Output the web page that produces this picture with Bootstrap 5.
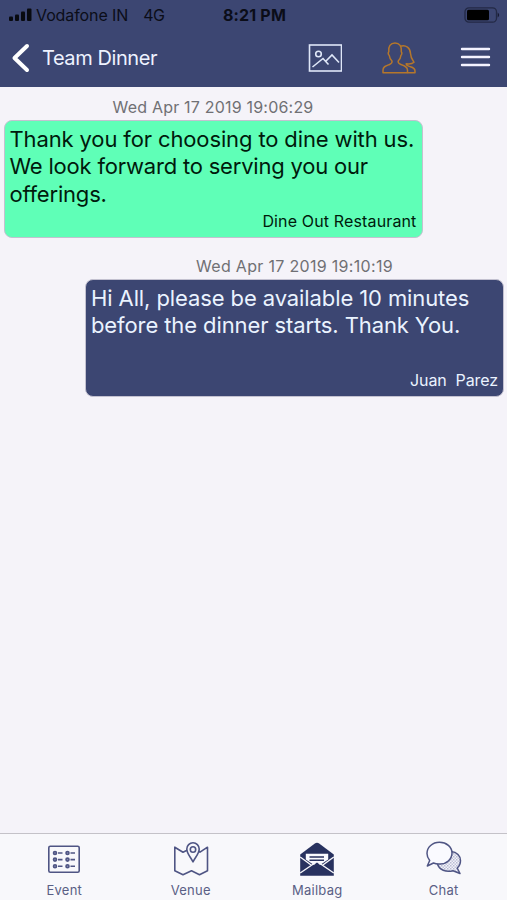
<!DOCTYPE html>
<html lang="en">
<head>
<meta charset="utf-8">
<meta name="viewport" content="width=device-width, initial-scale=1">
<title>Team Dinner</title>
<link href="https://cdn.jsdelivr.net/npm/bootstrap@5.3.0/dist/css/bootstrap.min.css" rel="stylesheet">
<style>
body{font-family:Inter,"Liberation Sans",sans-serif;background:#f5f3f9;color:#000;height:900px;overflow:hidden}
svg{display:block;flex:none}
.app-head{background:#3c4672;height:87px}
.status{height:30px;font-size:16px;line-height:30px;color:#0b0d18;padding-left:9px;padding-right:7px}
.status .side{flex:1 1 0}
.carrier{letter-spacing:-.1px;margin-left:4px}
.netw{letter-spacing:-.4px;margin-left:15px}
.clock{font-weight:700;letter-spacing:.17px}
.titlebar{height:55px;padding-left:11px;padding-right:16px}
.title{font-size:20px;line-height:24px;letter-spacing:-.42px;color:#eef2ff;margin-left:12px}
.actions{gap:40px}
.actions .menu-ico{margin-left:4px;margin-bottom:1px}
.thread{padding:10px 3px 0 3.5px}
.stamp{font-size:16px;line-height:20px;letter-spacing:.2px;color:#707074;margin-bottom:2.5px}
.stamp-late{letter-spacing:.31px}
.msg{width:419px}
.msg+.msg{margin-top:18.500px}
.bubble{height:118px;border:1px solid #c3c1d0;border-radius:8px;padding:5.500px 5px 5.500px}
.bubble p{font-size:22px;line-height:27.3px;letter-spacing:-.13px;white-space:nowrap}
.bubble p .tight{letter-spacing:-.2px}
.sender{font-size:16px;line-height:20px;letter-spacing:.14px}
.theirs{background:#5fffb7;color:#001a0c}
.mine{background:#3c4672;color:#eaf3ff}
.mine p{letter-spacing:-.1px}
.mine .sender{letter-spacing:-.08px;white-space:pre}
.tabs{height:67px;background:#f8f8fb;border-top:1px solid #c4c2c8;padding-left:1px}
.tabs a{flex:1 1 0;color:#5a5f85;font-size:13px;line-height:16px;letter-spacing:.27px;padding-top:7px}
.tabs svg{margin-bottom:5px}
</style>
</head>
<body class="d-flex flex-column">
<header class="app-head flex-shrink-0">
<div class="status d-flex align-items-center">
<div class="side d-flex align-items-center">
<svg width="23" height="14" viewBox="0 0 23 14" fill="#080a10"><rect y="8.500" width="4" height="4.500" rx="1"/><rect x="6" y="6.500" width="4" height="6.500" rx="1"/><rect x="12" y="3.500" width="4" height="9.500" rx="1"/><rect x="18" y="0.500" width="4.500" height="12.500" rx="1"/></svg>
<span class="carrier">Vodafone IN</span><span class="netw">4G</span></div>
<span class="clock">8:21 PM</span>
<div class="side d-flex justify-content-end">
<svg width="36" height="16" viewBox="0 0 36 16"><rect x="1" y="0.800" width="31.500" height="14.400" rx="4" fill="none" stroke="#232945" stroke-width="1.300"/><rect x="3" y="2.800" width="22" height="10.400" rx="1.500" fill="#000"/><path d="M33.700 5.500q3 2.500 0 5z" fill="#161a30"/></svg></div>
</div>
<nav class="titlebar d-flex align-items-center">
<svg width="19" height="30" viewBox="0 0 19 30" fill="none" stroke="#fff" stroke-width="4" stroke-linecap="round" stroke-linejoin="round"><path d="M16 3L3.500 15L16 27"/></svg>
<h1 class="title mb-0 fw-normal">Team Dinner</h1>
<div class="actions ms-auto d-flex align-items-center">
<svg width="34" height="28" viewBox="0 0 34 28" fill="none" stroke="#dfe7f8" stroke-width="1.600"><rect x="1.500" y="1" width="32" height="26"/><circle cx="10.500" cy="10" r="2.800"/><path d="M4.500 23L15 14.500L20.500 20.500M17.500 17.500L24 11L31 18.500"/></svg>
<svg width="34" height="32" viewBox="0 0 34 32" fill="none" stroke="#b5772b" stroke-width="1.500" stroke-linejoin="round"><path d="M1 30.700V28C1 24.500 4 23.800 7.500 22.500C10 21.500 10.300 20.500 10 19C8.200 17.500 7.500 15.500 7.300 13.500C6 12.500 6 10.500 6.800 9.800C6 4.500 8.500 1 13 1S20 4.500 19.300 9.800C20.200 10.500 20 12.500 18.900 13.500C18.700 15.500 18 17.500 16.200 19C15.900 20.500 16.500 21.500 18.800 22.500C22.500 23.800 25.500 24.800 25.500 28V30.700Z"/><path d="M18.300 4.300C24 2.500 28.300 6 28.500 11.500C28.600 15.500 30.500 18 32 20.300C30 22.200 27.500 22.200 24.200 21.800C24 23.500 26 24 28.500 24.800C31.500 25.700 33 26.800 33 29V30.700H25.500"/></svg>
<svg class="menu-ico" width="31" height="22" viewBox="0 0 31 22" fill="none" stroke="#f4f3ff" stroke-width="2.400" stroke-linecap="round"><path d="M2 3H29M2 11H29M2 19H29"/></svg>
</div>
</nav>
</header>
<main class="thread flex-grow-1">
<section class="msg">
<div class="stamp text-center">Wed Apr 17 2019 19:06:29</div>
<div class="bubble theirs d-flex flex-column">
<p class="mb-0">Thank you for choosing to dine with us.<br><span class="tight">We look forward to serving you our<br>offerings.</span></p>
<div class="sender mt-auto text-end">Dine Out Restaurant</div>
</div>
</section>
<section class="msg ms-auto">
<div class="stamp stamp-late text-center">Wed Apr 17 2019 19:10:19</div>
<div class="bubble mine d-flex flex-column">
<p class="mb-0">Hi All, please be available 10 minutes<br>before the dinner starts. Thank You.</p>
<div class="sender mt-auto text-end">Juan  Parez</div>
</div>
</section>
</main>
<nav class="tabs d-flex flex-shrink-0">
<a class="d-flex flex-column align-items-center text-decoration-none" href="#">
<svg width="36" height="36" viewBox="0 0 36 36" fill="none" stroke="#4f5584" stroke-width="1.600"><rect x="2.800" y="5.300" width="30.400" height="26" rx="1.500"/><g id="evrow"><circle cx="9" cy="12" r="1.500" fill="#8b8fb2"/><circle cx="21.500" cy="12" r="1.500" fill="#8b8fb2"/><path d="M12 12H16.500M24.500 12H29"/></g><use href="#evrow" y="6.600"/><use href="#evrow" y="13.200"/></svg>
<span>Event</span></a>
<a class="d-flex flex-column align-items-center text-decoration-none" href="#">
<svg width="36" height="36" viewBox="0 0 36 36" fill="none" stroke="#4f5584" stroke-width="1.600" stroke-linejoin="round"><path d="M14 9.200L10 11.200L1.800 6.200V29.800L10 33.800L18.500 29.800L26.500 33.800L34.500 29.800V6.200L27 11.200L25.500 10"/><path d="M20 20.800C17.500 16 13.800 12.500 13.800 8A6.200 6.200 0 0 1 26.200 8C26.200 12.500 22.500 16 20 20.800Z"/><circle cx="20" cy="8.500" r="2.700"/></svg>
<span>Venue</span></a>
<a class="d-flex flex-column align-items-center text-decoration-none" href="#" aria-current="page">
<svg width="36" height="36" viewBox="0 0 36 36"><path d="M1.200 13.500L15.500 2.700Q18 1 20.500 2.700L34.800 13.500V34.800H1.200Z" fill="#28325f"/><path d="M6.800 18.500V12.800H29.200V18.500L18 26Z" fill="#fafbff"/><path d="M10.500 16H25M10.500 19.300H25" stroke="#28325f" stroke-width="1.500"/><path d="M13.500 25.500L18 21L22.500 25.500V28H13.500Z" fill="#28325f"/><path d="M1.200 16L12.800 24.500M34.800 16L23.200 24.500M1.200 32L18 20.500L34.800 32" fill="none" stroke="#f8f8fb" stroke-width="1.400"/></svg>
<span>Mailbag</span></a>
<a class="d-flex flex-column align-items-center text-decoration-none" href="#">
<svg width="36" height="36" viewBox="0 0 36 36" stroke="#4f5584" stroke-width="1.500" stroke-linejoin="round"><defs><pattern id="dots" width="3" height="3" patternUnits="userSpaceOnUse"><rect width="3" height="3" fill="#f3f4fa" stroke="none"/><rect width="1.500" height="1.500" fill="#b9bbd3" stroke="none"/><rect x="1.500" y="1.500" width="1.500" height="1.500" fill="#c3c5da" stroke="none"/></pattern></defs><path d="M25 10.500C31 11 34.500 15 34.500 19.500C34.500 23 33 25.500 31.200 27L34 32.500L27 29.800C20 31.500 13 29 11.500 23Z" fill="url(#dots)"/><path d="M13.500 1.300C20.500 1.300 26 6 26 12S20.500 23.500 13 23C11 23 9 22.700 7.500 22L1.300 25L3.700 19.500C2 17.500 1 15 1 12.500C1 6 6.500 1.300 13.500 1.300Z" fill="#fafaff"/></svg>
<span>Chat</span></a>
</nav>
<script src="https://cdn.jsdelivr.net/npm/bootstrap@5.3.0/dist/js/bootstrap.bundle.min.js"></script>
</body>
</html>
